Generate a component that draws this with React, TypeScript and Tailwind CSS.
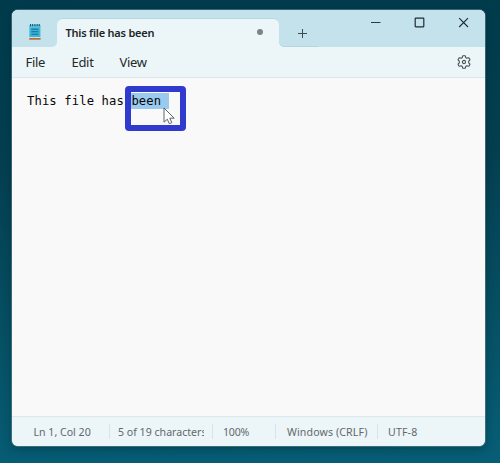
import React from "react";

function NotepadIcon() {
  return (
    <svg width="14" height="18" viewBox="0 0 14 18" className="mt-[13px] ml-[16px] shrink-0">
      <rect x="1.4" y="2" width="11" height="13" rx="0.8" fill="#3bb5d8" />
      <rect x="1.4" y="2" width="11" height="2.4" fill="#5ccbe6" />
      <path d="M2.6 1v2.2M4.7 1v2.2M6.9 1v2.2M9.1 1v2.2M11.2 1v2.2" stroke="#12506b" strokeWidth="1.1" />
      <path d="M3.4 6.2h7M3.4 8.7h7M3.4 11.2h7" stroke="#146b96" strokeWidth="1.1" />
      <rect x="1.2" y="15" width="11.4" height="1.7" fill="#bd6a32" />
      <rect x="1.2" y="14.1" width="11.4" height="0.9" fill="#d8e8eb" />
    </svg>
  );
}

function TitleBar() {
  return (
    <header className="flex h-[37px] shrink-0 bg-[#ecf5f8]">
      <div className="flex w-[45px] shrink-0 rounded-br-[5px] bg-[#c4e2eb]">
        <NotepadIcon />
      </div>
      <div className="h-[22px] w-[222px] shrink-0 bg-[#c4e2eb] pt-[8px]">
        <div className="flex h-[29px] items-center justify-between rounded-t-[6px] border-t border-[#b5d7df] bg-[#ecf5f8] pr-[16px] pl-[8.5px]">
          <span className="mt-[-1px] text-[11px] leading-[15px] font-semibold tracking-[-0.22px] whitespace-nowrap text-[#202527]">This file has been</span>
          <span className="mt-[-2px] size-[6px] rounded-full bg-[#7c8386]" />
        </div>
      </div>
      <div className="flex w-[39px] shrink-0 rounded-bl-[5px] border-b border-[#b6d6df] bg-[#c4e2eb]">
        <svg width="11" height="11" viewBox="0 0 11 11" className="mt-[17.5px] ml-[17.5px]">
          <path d="M1 5.5h9M5.5 1v9" stroke="#3d4c51" strokeWidth="1" />
        </svg>
      </div>
      <div className="flex flex-1 justify-end gap-[33px] bg-[#c4e2eb] pt-[7px] pr-[16px]">
        <svg width="11" height="11" viewBox="0 0 11 11">
          <path d="M1 5.5h9.5" stroke="#2d3b40" strokeWidth="1" />
        </svg>
        <svg width="11" height="11" viewBox="0 0 11 11">
          <rect x="1.2" y="1.2" width="8.6" height="8.6" rx="0.5" fill="none" stroke="#1e2c31" strokeWidth="1.2" />
        </svg>
        <svg width="11" height="11" viewBox="0 0 11 11">
          <path d="m1.2 1.2 8.8 8.8M10 1.2 1.2 10" stroke="#1e2c31" strokeWidth="1.1" />
        </svg>
      </div>
    </header>
  );
}

function MenuBar() {
  return (
    <nav className="flex h-[31px] shrink-0 items-center border-b border-[#dbe7ea] bg-[#ecf5f8] pl-[13.5px] text-[13px] tracking-[-0.3px] text-[#24292b]">
      <span className="w-[46px] pt-[2px]">File</span>
      <span className="w-[48px] pt-[2px]">Edit</span>
      <span className="pt-[2px]">View</span>
      <svg width="16" height="16" viewBox="0 0 16 16" className="mr-[13px] ml-auto" fill="none" stroke="#465256" strokeWidth="1.1" strokeLinejoin="round">
        <path d="M6.6 2.1 7 1.7h2l.4.4.3 1.5 1.1.6 1.6-.5.6.2.9 1.6-.1.6-1.1 1.1v1.6l1.1 1.1.1.6-.9 1.6-.6.2-1.6-.5-1.1.6-.3 1.5-.4.4H7l-.4-.4-.3-1.5-1.1-.6-1.6.5-.6-.2-.9-1.6.1-.6 1.1-1.1V7.2L2.2 6.1l-.1-.6L3 3.9l.6-.2 1.6.5 1.1-.6Z" />
        <circle cx="8" cy="8" r="1.6" />
      </svg>
    </nav>
  );
}

function Editor() {
  return (
    <main className="relative flex-1 bg-[#f9f9f9] pt-[15px] pl-[15px]">
      <p className="font-['DejaVu_Sans_Mono',monospace] text-[12.2px] leading-[16px] tracking-[0.12px] whitespace-pre text-[#080808]">
        This file has <span className="inline-block h-[16px] bg-[#9acbef]">been </span>
      </p>
      <div className="absolute top-[7.5px] left-[112.5px] h-[45.5px] w-[61px] rounded-[4px] border-[6px] border-[#303bcd]" />
      <svg width="13" height="18" viewBox="0 0 13 18" className="absolute top-[29px] left-[150.5px]">
        <path d="M1 1v14.2l3.3-3 2 4.5 2.5-1.1-2-4.4h4.4Z" fill="#fff" stroke="#505358" strokeWidth="0.9" />
      </svg>
    </main>
  );
}

function StatusBar() {
  return (
    <footer className="flex h-[30px] shrink-0 items-center border-t border-[#dde8eb] bg-[#ecf5f8] text-[10.6px] whitespace-nowrap text-[#62696c]">
      <span className="w-[97px] pt-[2px] pl-[21.5px]">Ln 1, Col 20</span>
      <span className="h-[15px] w-px bg-[#d9e4e7]" />
      <span className="w-[102px] pt-[2px] pl-[8px]">
        <span className="block w-[86px] overflow-hidden">5 of 19 characters</span>
      </span>
      <span className="h-[15px] w-px bg-[#d9e4e7]" />
      <span className="w-[62px] pt-[2px] pl-[10px] tracking-[-0.2px]">100%</span>
      <span className="h-[15px] w-px bg-[#d9e4e7]" />
      <span className="w-[101px] pt-[2px] pl-[11px] tracking-[0.12px]">Windows (CRLF)</span>
      <span className="h-[15px] w-px bg-[#d9e4e7]" />
      <span className="pt-[2px] pl-[10px] tracking-[0.15px]">UTF-8</span>
    </footer>
  );
}

export default function App() {
  return (
    <div className="h-[463px] w-[500px] overflow-hidden bg-[linear-gradient(178deg,#003b4c_0%,#043f51_35%,#065064_70%,#065e76_100%)] pt-[10px] pl-[12px] font-['Noto_Sans',sans-serif]">
      <div className="flex h-[436px] w-[473px] flex-col overflow-hidden rounded-[6px] bg-[#ecf5f8] shadow-[0_0_0_1px_rgba(110,145,155,0.5),0_3px_10px_rgba(0,25,35,0.35)]">
        <TitleBar />
        <MenuBar />
        <Editor />
        <StatusBar />
      </div>
    </div>
  );
}
